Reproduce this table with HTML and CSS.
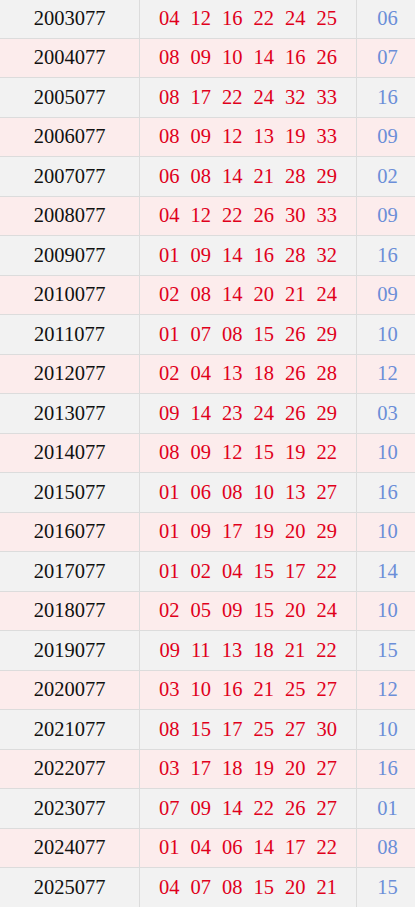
FILE: index.html
```html
<!DOCTYPE html>
<html lang="zh">
<head>
<meta charset="utf-8">
<link rel="stylesheet" href="styles.css">
</head>
<body>
<table class="draws">
<colgroup><col class="c-issue"><col class="c-red"><col class="c-blue"></colgroup>
<tbody>
<tr class="odd"><td>2003077</td><td class="reds"><span>04</span><span>12</span><span>16</span><span>22</span><span>24</span><span>25</span></td><td class="blue">06</td></tr>
<tr class="even"><td>2004077</td><td class="reds"><span>08</span><span>09</span><span>10</span><span>14</span><span>16</span><span>26</span></td><td class="blue">07</td></tr>
<tr class="odd"><td>2005077</td><td class="reds"><span>08</span><span>17</span><span>22</span><span>24</span><span>32</span><span>33</span></td><td class="blue">16</td></tr>
<tr class="even"><td>2006077</td><td class="reds"><span>08</span><span>09</span><span>12</span><span>13</span><span>19</span><span>33</span></td><td class="blue">09</td></tr>
<tr class="odd"><td>2007077</td><td class="reds"><span>06</span><span>08</span><span>14</span><span>21</span><span>28</span><span>29</span></td><td class="blue">02</td></tr>
<tr class="even"><td>2008077</td><td class="reds"><span>04</span><span>12</span><span>22</span><span>26</span><span>30</span><span>33</span></td><td class="blue">09</td></tr>
<tr class="odd"><td>2009077</td><td class="reds"><span>01</span><span>09</span><span>14</span><span>16</span><span>28</span><span>32</span></td><td class="blue">16</td></tr>
<tr class="even"><td>2010077</td><td class="reds"><span>02</span><span>08</span><span>14</span><span>20</span><span>21</span><span>24</span></td><td class="blue">09</td></tr>
<tr class="odd"><td>2011077</td><td class="reds"><span>01</span><span>07</span><span>08</span><span>15</span><span>26</span><span>29</span></td><td class="blue">10</td></tr>
<tr class="even"><td>2012077</td><td class="reds"><span>02</span><span>04</span><span>13</span><span>18</span><span>26</span><span>28</span></td><td class="blue">12</td></tr>
<tr class="odd"><td>2013077</td><td class="reds"><span>09</span><span>14</span><span>23</span><span>24</span><span>26</span><span>29</span></td><td class="blue">03</td></tr>
<tr class="even"><td>2014077</td><td class="reds"><span>08</span><span>09</span><span>12</span><span>15</span><span>19</span><span>22</span></td><td class="blue">10</td></tr>
<tr class="odd"><td>2015077</td><td class="reds"><span>01</span><span>06</span><span>08</span><span>10</span><span>13</span><span>27</span></td><td class="blue">16</td></tr>
<tr class="even"><td>2016077</td><td class="reds"><span>01</span><span>09</span><span>17</span><span>19</span><span>20</span><span>29</span></td><td class="blue">10</td></tr>
<tr class="odd"><td>2017077</td><td class="reds"><span>01</span><span>02</span><span>04</span><span>15</span><span>17</span><span>22</span></td><td class="blue">14</td></tr>
<tr class="even"><td>2018077</td><td class="reds"><span>02</span><span>05</span><span>09</span><span>15</span><span>20</span><span>24</span></td><td class="blue">10</td></tr>
<tr class="odd"><td>2019077</td><td class="reds"><span>09</span><span>11</span><span>13</span><span>18</span><span>21</span><span>22</span></td><td class="blue">15</td></tr>
<tr class="even"><td>2020077</td><td class="reds"><span>03</span><span>10</span><span>16</span><span>21</span><span>25</span><span>27</span></td><td class="blue">12</td></tr>
<tr class="odd"><td>2021077</td><td class="reds"><span>08</span><span>15</span><span>17</span><span>25</span><span>27</span><span>30</span></td><td class="blue">10</td></tr>
<tr class="even"><td>2022077</td><td class="reds"><span>03</span><span>17</span><span>18</span><span>19</span><span>20</span><span>27</span></td><td class="blue">16</td></tr>
<tr class="odd"><td>2023077</td><td class="reds"><span>07</span><span>09</span><span>14</span><span>22</span><span>26</span><span>27</span></td><td class="blue">01</td></tr>
<tr class="even"><td>2024077</td><td class="reds"><span>01</span><span>04</span><span>06</span><span>14</span><span>17</span><span>22</span></td><td class="blue">08</td></tr>
<tr class="odd"><td>2025077</td><td class="reds"><span>04</span><span>07</span><span>08</span><span>15</span><span>20</span><span>21</span></td><td class="blue">15</td></tr>
</tbody>
</table>
</body>
</html>
```
FILE: styles.css
```css
html, body {
  margin: 0;
  padding: 0;
  background: #ffffff;
  overflow: hidden;
}
.draws {
  width: 419px;
  margin: -2px 0 0 -1px;
  border-collapse: collapse;
  table-layout: fixed;
  font-family: "Liberation Serif", "Times New Roman", serif;
  font-size: 20.5px;
  color: #111;
}
.c-issue { width: 140px; }
.c-red { width: 217px; }
.c-blue { width: 62px; }
.draws td {
  height: 37.5px;
  padding: 0 0 1px 0;
  border: 1px solid #dcdcdc;
  text-align: center;
  vertical-align: middle;
  line-height: 1;
}
.draws tr.odd td { background: #f2f2f2; }
.draws tr.even td { background: #fcecec; }
.draws td.reds {
  color: #e0001b;
}
.draws td.reds span {
  display: inline-block;
  margin: 0 5.5px;
}
.draws td.blue {
  color: #6b8ed8;
}
```
